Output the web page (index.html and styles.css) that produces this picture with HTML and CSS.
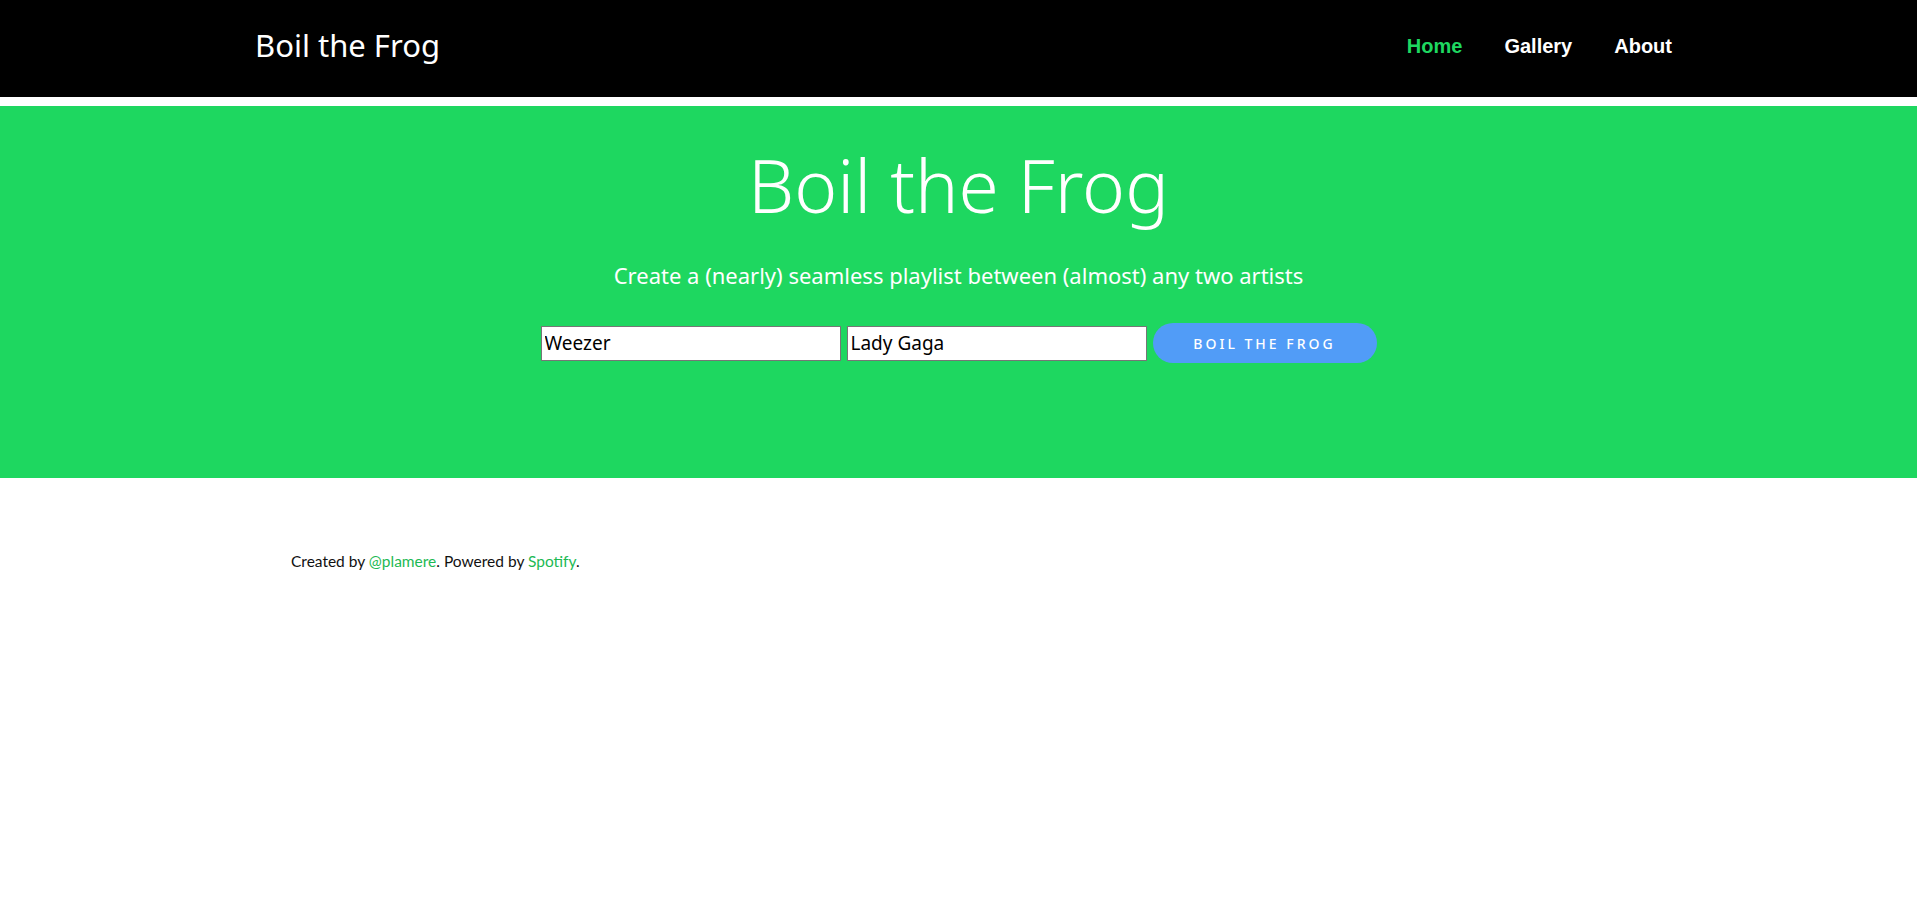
FILE: index.html
```html
<!DOCTYPE html>
<html>
<head>
<meta charset="utf-8">
<title>Boil the Frog</title>
<link rel="stylesheet" href="styles.css">
</head>
<body>
<header class="topbar">
  <div class="topbar-inner">
    <a class="brand" href="#">Boil the Frog</a>
    <nav class="nav">
      <a class="nav-link active" href="#">Home</a>
      <a class="nav-link" href="#">Gallery</a>
      <a class="nav-link" href="#">About</a>
    </nav>
  </div>
</header>
<section class="hero">
  <h1 class="hero-title">Boil the Frog</h1>
  <p class="hero-sub">Create a (nearly) seamless playlist between (almost) any two artists</p>
  <form class="search">
    <input class="artist" type="text" value="Weezer">
    <input class="artist" type="text" value="Lady Gaga">
    <button class="go" type="button">Boil the frog</button>
  </form>
</section>
<footer class="footer">
  Created by <a href="#">@plamere</a>. Powered by <a href="#">Spotify</a>.
</footer>
</body>
</html>
```
FILE: styles.css
```css
html, body {
  margin: 0;
  padding: 0;
  background: #fff;
}
body {
  font-family: "Noto Sans", "Liberation Sans", sans-serif;
}
a { text-decoration: none; }

.topbar {
  background: #000;
  height: 97px;
  border-bottom: 9px solid #fff;
}
.topbar-inner {
  height: 100%;
  display: flex;
  align-items: center;
  justify-content: space-between;
  padding: 0 245px 0 255px;
}
.brand {
  color: #fff;
  font-size: 31px;
  font-weight: 400;
  padding-bottom: 7px;
}
.nav {
  display: flex;
  gap: 42px;
  padding-bottom: 4px;
}
.nav-link {
  color: #fff;
  font-family: "Liberation Sans", Arial, sans-serif;
  font-weight: 700;
  font-size: 20px;
}
.nav-link.active { color: #1ed760; }

.hero {
  background: #1ed760;
  height: 372px;
  box-sizing: border-box;
  padding-top: 42px;
  display: flex;
  flex-direction: column;
  align-items: center;
  color: #fff;
}
.hero-title {
  margin: 0;
  font-family: "Noto Sans", sans-serif;
  font-weight: 300;
  font-size: 73px;
  line-height: 1;
}
.hero-sub {
  margin: 39px 0 0;
  font-size: 22px;
  font-weight: 400;
}
.search {
  display: flex;
  align-items: center;
  gap: 6px;
  margin-top: 33px;
}
.artist {
  width: 300px;
  height: 35px;
  box-sizing: border-box;
  border: 1px solid #767676;
  padding: 1px 3px;
  font-family: "Noto Sans", sans-serif;
  font-size: 19px;
  color: #000;
  background: #fff;
}
.go {
  width: 224px;
  height: 40px;
  border: none;
  border-radius: 20px;
  background: #519cf7;
  color: #fff;
  font-family: "Noto Sans", sans-serif;
  font-size: 14px;
  font-weight: 500;
  text-transform: uppercase;
  letter-spacing: 3px;
}

.footer {
  padding: 74px 0 0 291px;
  font-family: "Lato", sans-serif;
  font-size: 15.5px;
  color: #111;
}
.footer a { color: #1db954; }
```
